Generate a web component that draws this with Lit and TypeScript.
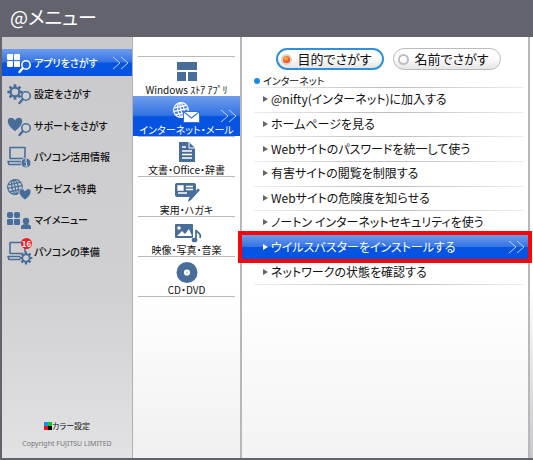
import { LitElement, html, css, svg, nothing } from "lit";
import { customElement, state } from "lit/decorators.js";

const lens = svg`<circle cx="19" cy="13" r="4.200" fill="var(--lens, #d0d0d3)" stroke="currentColor" stroke-width="1.600"/><path d="M15.500 16.500L12.500 20" stroke="currentColor" stroke-width="2.400" stroke-linecap="round"/>`;
const laptop = svg`<path d="M3 1.500h15v11H3zM1 15.500h13v3H2z" fill="none" stroke="currentColor" stroke-width="1.600" stroke-linejoin="round"/>`;
const gear = (x: number, y: number, s: number) => svg`<g transform="translate(${x} ${y}) scale(${s})"><circle r="4.800" fill="none" stroke="currentColor" stroke-width="2.300"/>${[0, 45, 90, 135, 180, 225, 270, 315].map(a => svg`<path d="M-1.800 -5.300L-1.300 -8.500H1.300L1.800 -5.300z" transform="rotate(${a})" fill="currentColor"/>`)}</g>`;
const globe = (x: number, y: number) => svg`<g transform="translate(${x} ${y})" fill="none" stroke="currentColor" stroke-width="1.200"><g transform="rotate(-12)"><circle r="7.300"/><ellipse rx="3.200" ry="7.300"/><path d="M0-7V7M-7 0H7M-6-3.500H6M-6 3.500H6"/></g></g>`;
const heart = (x: number, y: number, s: number) => svg`<path transform="translate(${x} ${y}) scale(${s})" d="M0 8C-4 5-8 1-8-3C-8-8-2-8 0-4C2-8 8-8 8-3C8 1 4 5 0 8z" fill="currentColor"/>`;

const sideIcons: Record<string, unknown> = {
  apps: svg`<g fill="currentColor"><rect y="2" width="6" height="6" rx="1"/><rect x="7" y="2" width="6" height="6" rx="1"/><rect y="9" width="6" height="6" rx="1"/><rect x="7" y="9" width="6" height="6" rx="1"/></g>${lens}`,
  gear: svg`${gear(8, 9, 0.9)}${lens}`,
  heart: svg`${heart(8, 9, 0.9)}${lens}`,
  info: svg`${laptop}<circle cx="19" cy="17" r="5" fill="currentColor" stroke="#d0d0d3"/><path d="M17.500 16H19.500v4M17.500 20h3.500" stroke="#d0d0d3" fill="none"/><circle cx="19" cy="14" r=".9" fill="#d0d0d3"/>`,
  globe: svg`${globe(8, 9)}<g stroke="#d0d0d3">${heart(18, 16, 0.75)}</g>`,
  people: svg`<g fill="currentColor"><rect x="0" y="3" width="6" height="6" rx="2"/><rect x="7" y="3" width="6" height="6" rx="2"/><rect x="0" y="10" width="6" height="6" rx="1"/><rect x="7" y="10" width="6" height="6" rx="1"/><circle cx="19" cy="12" r="3.200"/><path d="M14 20v-2c0-4 10-4 10 0v2z"/></g>`,
  prepare: svg`${laptop}<circle cx="19" cy="17" r="6" fill="#d0d0d3"/>${gear(19, 17, 0.75)}`,
};

const categoryIcons: Record<string, unknown> = {
  windows: svg`<path fill="currentColor" d="M7 0h20v8H7zM7 10h9v9H7zM18 10h9v9h-9z"/>`,
  mail: svg`${globe(11, 8)}<rect x="13" y="9" width="17" height="12" fill="#2e6fe2"/><path d="M14 10h15v10H14z" fill="currentColor"/><path d="M14 10l7.500 6 7.500-6" fill="none" stroke="#3a76e6" stroke-width="1.300"/>`,
  document: svg`<path d="M9 0h10l6 6v14H9z" fill="currentColor"/><path d="M19 0v6h6" fill="none" stroke="#fff"/><path d="M12 5h4M12 9h10M12 12.500h10M12 16h10" stroke="#fff" stroke-width="1.500"/>`,
  card: svg`<rect x="5" y="1" width="21" height="14" rx="2" fill="currentColor"/><path d="M8 4h5v4H8zM16 4.500h7M16 7.500h7M8 11h9" stroke="#fff" fill="#fff" stroke-width="1.300"/><path d="M31 8L20 19" stroke="#fff" stroke-width="5"/><path d="M30 8L21 18l-3 2 1-4L28 6.500z" fill="currentColor"/>`,
  media: svg`<rect x="5" y="2" width="18" height="14" rx="1" fill="currentColor"/><circle cx="9" cy="6" r="1.800" fill="#fff"/><path d="M7 14l5-5 3 3 4-5 3 7z" fill="#fff"/><path d="M26 18V8c1 3 6 3 4 8" fill="none" stroke="#fff" stroke-width="5"/><path d="M26 18V8c1 3 6 3 4 8" fill="none" stroke="currentColor" stroke-width="1.800"/><ellipse cx="24.500" cy="18" rx="2.800" ry="2.300" fill="currentColor"/>`,
  disc: svg`<circle cx="17" cy="10.500" r="6.800" fill="none" stroke="currentColor" stroke-width="7.400"/><circle cx="17" cy="10.500" r="1" fill="currentColor" opacity=".4"/>`,
};

const chevrons = html`<svg class="chevrons" width="17" height="12" viewBox="0 0 17 12" aria-hidden="true"><path d="M1 0l7 6-7 6M9 0l7 6-7 6" fill="none" stroke="#b9d0ff"/></svg>`;

@customElement("app-root")
export class AppRoot extends LitElement {
  @state() private side = 0;
  @state() private category = 1;
  @state() private item = 6;
  @state() private mode = "purpose";

  private sections = [
    ["apps", "アプリをさがす"], ["gear", "設定をさがす"], ["heart", "サポートをさがす"], ["info", "パソコン活用情報"],
    ["globe", "サービス・特典"], ["people", "マイメニュー"], ["prepare", "パソコンの準備"],
  ];
  private categories = [
    ["windows", "Windows ｽﾄｱ ｱﾌﾟﾘ"], ["mail", "インターネット・メール"], ["document", "文書・Office・辞書"],
    ["card", "実用・ハガキ"], ["media", "映像・写真・音楽"], ["disc", "CD・DVD"],
  ];
  private items = [
    "@nifty(インターネット)に加入する", "ホームページを見る", "Webサイトのパスワードを統一して使う", "有害サイトの閲覧を制限する",
    "Webサイトの危険度を知らせる", "ノートン インターネットセキュリティを使う", "ウイルスバスターをインストールする", "ネットワークの状態を確認する",
  ];

  static styles = css`
    :host { display: flex; flex-direction: column; min-height: 100vh; box-sizing: border-box; background: #62636d; color: #111; font-family: "Noto Sans CJK JP", "Noto Sans", sans-serif; font-feature-settings: "palt"; padding: 0 0 2px 2px; }
    * { box-sizing: border-box; }
    button { font: inherit; font-feature-settings: inherit; color: inherit; border: 0; background: none; padding: 0; margin: 0; white-space: nowrap; cursor: pointer; }
    ul { list-style: none; padding: 0; margin: 0; }
    svg { display: block; flex: none; overflow: visible; }
    header { height: 37px; padding-left: 8px; flex: none; }
    h1 { margin: 0; font-size: 19px; line-height: 34px; font-weight: 400; color: #fff; }
    .body { flex: 1; display: grid; grid-template-columns: 131px 109px 1fr; }
    .side { display: flex; flex-direction: column; padding-top: 12px; border-right: 1px solid #aeb0b4; background: linear-gradient(#cacacd, #d0d0d3 60%, #e2e2e5); }
    .sections { display: flex; flex-direction: column; justify-content: space-between; height: 216px; }
    .section { position: relative; display: flex; align-items: center; gap: 3px; width: 100%; height: 27px; padding-left: 5px; font-size: 10px; line-height: 14px; font-weight: 500; }
    .icon { color: #496d9b; }
    .active { background: linear-gradient(#6f9dec, #3474e4 48%, #0754e0 52%, #0553e4); color: #fff; }
    .active .icon { color: #fff; --lens: #1a62e2; }
    .chevrons { position: absolute; right: 3px; top: 50%; margin-top: -6px; }
    .badge { position: absolute; left: 19px; top: 0; width: 11px; height: 11px; border-radius: 50%; background: #f11d20; color: #fff; font-size: 8px; line-height: 11px; font-weight: 700; text-align: center; }
    footer { margin-top: auto; padding-bottom: 9px; display: flex; flex-direction: column; align-items: center; gap: 7px; }
    .color { display: flex; align-items: center; font-size: 8px; line-height: 12px; }
    .copy { font: 7px/10px "Noto Sans", sans-serif; color: #77777a; margin: 0; white-space: nowrap; }
    .categories { border-right: 2px solid #b5b9bb; background: linear-gradient(#fff 60%, #f0f0f1); padding-top: 19px; }
    .category { position: relative; display: flex; flex-direction: column; align-items: center; justify-content: flex-end; width: 100%; height: 40px; font-size: 10px; line-height: 12px; }
    .category::before { content: ""; position: absolute; left: 5px; right: 5px; top: 0; border-top: 1px solid #b9b9b9; }
    .category.active::before { display: none; }
    .last { margin: 0 5px; border-top: 1px solid #b9b9b9; }
    .content { min-width: 0; display: flex; background: linear-gradient(#fff 60%, #c8c8ca); }
    main { flex: 1; min-width: 0; margin-right: 3px; border-right: 2px solid #b5b9bb; background: linear-gradient(#fff 60%, #f3f3f4); padding-top: 11px; }
    .modes { display: flex; gap: 9px; justify-content: center; padding-left: 6px; }
    .mode { display: flex; align-items: center; gap: 6px; width: 108px; height: 22px; padding-left: 4px; border: 1px solid #bbb; border-radius: 11px; background: linear-gradient(#fff 40%, #e5e5e7); font-size: 13px; line-height: 18px; white-space: nowrap; }
    .mode.on { border: 2px solid #2f91dc; padding-left: 3px; }
    input { appearance: none; width: 11px; height: 11px; border: 2px solid #bebec2; border-radius: 50%; background: #fff; margin: 0; flex: none; }
    input:checked { background: radial-gradient(circle at 40% 35%, #ffc34c, #f0551c 55%, #d33b12); border-color: #ddd0cb; }
    h2 { margin: 5px 0 0 12px; display: flex; align-items: center; gap: 3px; font-size: 10px; line-height: 12px; font-weight: 400; }
    h2::before { content: ""; width: 6px; height: 6px; border-radius: 50%; background: #178ce6; }
    .items { display: grid; grid-auto-rows: 1fr; height: 197px; }
    .items li { display: flex; padding: 0 4px 0 12px; position: relative; }
    .items li::before { content: ""; position: absolute; top: 0; left: 12px; right: 4px; border-top: 1px solid; border-image: linear-gradient(90deg, #eee, #bbb 50%, #eee) 1; }
    .item { position: relative; display: flex; align-items: center; gap: 3px; flex: 1; padding-left: 9px; font-size: 12px; line-height: 16px; }
    .item::before { content: ""; border: 3px solid transparent; border-left: 5px solid #666; border-right: 0; }
    .items li.chosen { padding: 0; z-index: 1; }
    .items li.chosen::before { display: none; }
    .chosen .item { outline: 4px solid #f80505; padding-left: 21px; }
    .chosen .item::before { border-left-color: #fff; }
    .end { margin: 0 4px 0 12px; height: 1px; background: linear-gradient(90deg, #eee, #bbb 50%, #eee); }
  `;

  render() {
    return html`
      <header><h1>@メニュー</h1></header>
      <div class="body">
        <nav class="side">
          <div class="sections">${this.sections.map(([icon, label], i) => html`
            <button class="section ${this.side === i ? "active" : ""}" @click=${() => (this.side = i)}>
              <svg class="icon" width="24" height="22" viewBox="0 0 24 22" aria-hidden="true">${sideIcons[icon]}</svg>
              ${icon === "prepare" ? html`<span class="badge">16</span>` : nothing}
              <span>${label}</span>${this.side === i ? chevrons : nothing}
            </button>`)}
          </div>
          <footer>
            <button class="color"><svg width="8" height="8" viewBox="0 0 8 8" aria-hidden="true"><path fill="#168cff" d="M0 0h4v4H0z"/><path fill="#0c2" d="M4 0h4v4H4z"/><path fill="#f01020" d="M0 4h4v4H0z"/><path d="M4 4h4v4H4z"/></svg>カラー設定</button>
            <p class="copy">Copyright FUJITSU LIMITED</p>
          </footer>
        </nav>
        <nav class="categories">${this.categories.map(([icon, label], i) => html`
          <button class="category ${this.category === i ? "active" : ""}" @click=${() => (this.category = i)}>
            <svg class="icon" width="34" height="22" viewBox="0 0 34 22" aria-hidden="true">${categoryIcons[icon]}</svg>
            <span>${label}</span>${this.category === i ? chevrons : nothing}
          </button>`)}
          <div class="last"></div>
        </nav>
        <div class="content"><main>
          <div class="modes">${[["purpose", "目的でさがす"], ["name", "名前でさがす"]].map(([id, label]) => html`
            <label class="mode ${this.mode === id ? "on" : ""}"><input type="radio" name="mode" .checked=${this.mode === id} @change=${() => (this.mode = id)}>${label}</label>`)}
          </div>
          <h2>インターネット</h2>
          <ul class="items">${this.items.map((label, i) => html`
            <li class=${this.item === i ? "chosen" : ""}><button class="item ${this.item === i ? "active" : ""}" @click=${() => (this.item = i)}>${label}${this.item === i ? chevrons : nothing}</button></li>`)}
          </ul>
          <div class="end"></div>
        </main></div>
      </div>`;
  }
}
